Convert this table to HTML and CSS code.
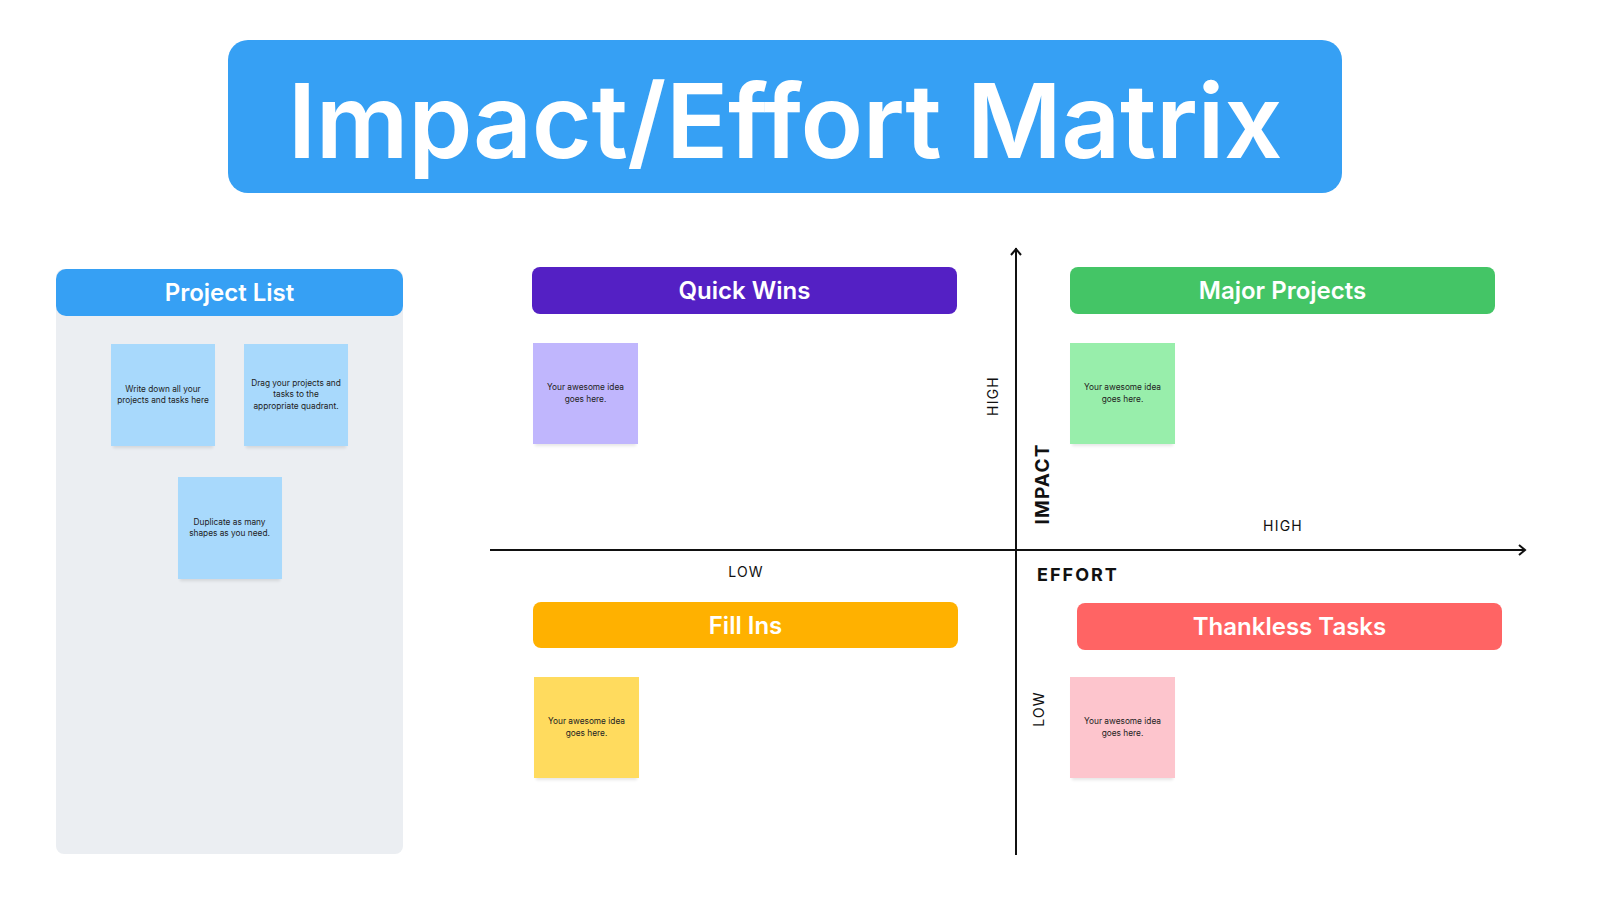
FILE: index.html
```html
<!DOCTYPE html>
<html lang="en">
<head>
<meta charset="utf-8">
<title>Impact/Effort Matrix</title>
<link rel="stylesheet" href="styles.css">
</head>
<body>
<div class="page">
  <header class="banner-row">
    <h1 class="banner">Impact/Effort Matrix</h1>
  </header>
  <main class="board">
    <section class="panel">
      <h2 class="panel-head">Project List</h2>
      <div class="panel-notes">
        <div class="note note-blue">Write down all your<br>projects and tasks here</div>
        <div class="note note-blue">Drag your projects and<br>tasks to the<br>appropriate quadrant.</div>
        <div class="note note-blue">Duplicate as many<br>shapes as you need.</div>
      </div>
    </section>
    <section class="matrix">
      <div class="quad quad-tl">
        <h3 class="qhead qhead-purple">Quick Wins</h3>
        <div class="note note-purple">Your awesome idea<br>goes here.</div>
      </div>
      <div class="quad quad-tr">
        <h3 class="qhead qhead-green">Major Projects</h3>
        <div class="note note-green">Your awesome idea<br>goes here.</div>
      </div>
      <div class="quad quad-bl">
        <h3 class="qhead qhead-orange">Fill Ins</h3>
        <div class="note note-yellow">Your awesome idea<br>goes here.</div>
      </div>
      <div class="quad quad-br">
        <h3 class="qhead qhead-red qhead-shift">Thankless Tasks</h3>
        <div class="note note-pink">Your awesome idea<br>goes here.</div>
      </div>
      <svg class="axes" width="1040" height="608" viewBox="0 0 1040 608">
        <line x1="526" y1="1" x2="526" y2="608" stroke="#111" stroke-width="2"/>
        <polyline points="521,8 526,2 531,8" fill="none" stroke="#111" stroke-width="2" stroke-linejoin="miter"/>
        <line x1="0" y1="303" x2="1035" y2="303" stroke="#111" stroke-width="2"/>
        <polyline points="1029,298 1035,303 1029,308" fill="none" stroke="#111" stroke-width="2" stroke-linejoin="miter"/>
      </svg>
      <span class="axis-label vert lbl-high-v">HIGH</span>
      <span class="axis-label vert axis-title lbl-impact">IMPACT</span>
      <span class="axis-label lbl-high-h">HIGH</span>
      <span class="axis-label lbl-low-h">LOW</span>
      <span class="axis-label axis-title lbl-effort">EFFORT</span>
      <span class="axis-label vert lbl-low-v">LOW</span>
    </section>
  </main>
</div>
</body>
</html>
```
FILE: styles.css
```css
* { box-sizing: border-box; }
html, body { margin: 0; padding: 0; background: #ffffff; }
body { font-family: "Inter", "Open Sans", sans-serif; color: #111; }

.page { width: 1600px; height: 900px; overflow: hidden; }

.banner-row { padding-top: 40px; padding-left: 228px; }
.banner {
  margin: 0;
  width: 1114px;
  height: 153px;
  background: #36a0f4;
  border-radius: 20px;
  color: #ffffff;
  font-size: 103px;
  font-weight: 600;
  letter-spacing: -0.4px;
  line-height: 1;
  display: flex;
  align-items: center;
  justify-content: center;
  padding-top: 8px;
}

.board {
  display: flex;
  align-items: flex-start;
  padding-left: 56px;
  margin-top: 54px;
}

.panel {
  width: 347px;
  height: 585px;
  margin-top: 22px;
  background: #ebeef2;
  border-radius: 8px;
}
.panel-head {
  margin: 0;
  height: 47px;
  background: #36a0f4;
  border-radius: 10px;
  color: #fff;
  font-size: 24px;
  font-weight: 600;
  display: flex;
  align-items: center;
  justify-content: center;
}
.panel-notes {
  width: 237px;
  margin: 28px auto 0;
  display: flex;
  flex-wrap: wrap;
  justify-content: center;
  gap: 31px 29px;
}

.note {
  width: 104px;
  height: 102px;
  display: flex;
  align-items: center;
  justify-content: center;
  text-align: center;
  font-size: 8.3px;
  line-height: 11.5px;
  color: #222;
  box-shadow: 0 4px 3px -2px rgba(0, 0, 0, 0.10);
}
.note-blue { background: #a8d9fc; }
.note-purple { background: #c0b6fd; width: 105px; height: 101px; }
.note-green { background: #98eeab; width: 105px; height: 101px; }
.note-yellow { background: #ffdb5e; width: 105px; height: 101px; }
.note-pink { background: #fdc5cd; width: 105px; height: 101px; }

.matrix {
  position: relative;
  width: 1040px;
  height: 608px;
  margin-left: 87px;
  display: grid;
  grid-template-columns: 526px 514px;
  grid-template-rows: 303px 305px;
}
.quad { display: flex; flex-direction: column; align-items: flex-start; }
.quad-tl { padding: 20px 0 0 42px; }
.quad-tr { padding: 20px 0 0 54px; }
.quad-bl { padding: 52px 0 0 43px; }
.quad-br { padding: 52px 0 0 54px; }

.qhead {
  margin: 0 0 29px;
  width: 425px;
  height: 47px;
  border-radius: 8px;
  color: #fff;
  font-size: 24px;
  font-weight: 600;
  display: flex;
  align-items: center;
  justify-content: center;
}
.quad-tl .note, .quad-bl .note { margin-left: 1px; }
.qhead-purple { background: #5420c4; }
.qhead-green { background: #44c566; }
.qhead-orange { background: #ffb100; height: 46px; }
.qhead-red { background: #ff6464; }
.qhead-shift { margin: 1px 0 27px 7px; }

.axes { position: absolute; left: 0; top: 0; pointer-events: none; }

.axis-label {
  position: absolute;
  font-size: 14px;
  font-weight: 400;
  letter-spacing: 1.2px;
  line-height: 1;
  color: #111;
  white-space: nowrap;
  transform: translate(-50%, -50%);
}
.axis-label.vert { transform: translate(-50%, -50%) rotate(-90deg); }
.axis-title { font-weight: 700; font-size: 18px; letter-spacing: 2px; }
.lbl-impact { font-size: 19px; letter-spacing: 1.2px; }

.lbl-high-v { left: 503px; top: 149px; }
.lbl-impact { left: 552px; top: 237px; }
.lbl-high-h { left: 793px; top: 279px; }
.lbl-low-h { left: 256px; top: 325px; }
.lbl-effort { left: 588px; top: 328px; }
.lbl-low-v { left: 549px; top: 462px; }
```
